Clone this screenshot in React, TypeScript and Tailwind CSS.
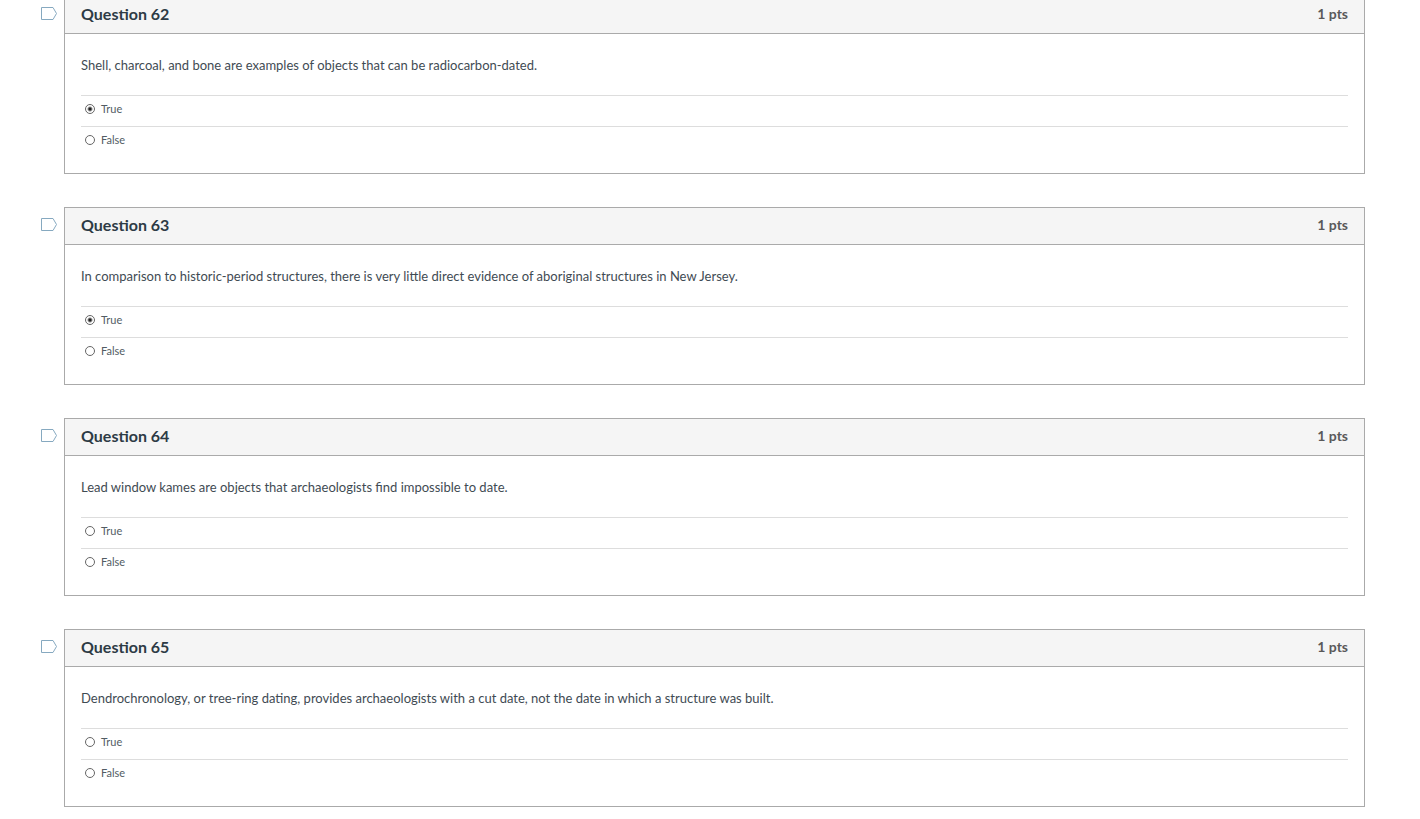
import React, { useState } from "react";

interface Question {
  id: number;
  text: string;
  points: number;
  answer?: string;
}

interface QuestionCardProps {
  question: Question;
}

const questions: Question[] = [
  {
    id: 62,
    text: "Shell, charcoal, and bone are examples of objects that can be radiocarbon-dated.",
    points: 1,
    answer: "True",
  },
  {
    id: 63,
    text: "In comparison to historic-period structures, there is very little direct evidence of aboriginal structures in New Jersey.",
    points: 1,
    answer: "True",
  },
  {
    id: 64,
    text: "Lead window kames are objects that archaeologists find impossible to date.",
    points: 1,
  },
  {
    id: 65,
    text: "Dendrochronology, or tree-ring dating, provides archaeologists with a cut date, not the date in which a structure was built.",
    points: 1,
  },
];

const QuestionCard: React.FC<QuestionCardProps> = ({ question }) => {
  const [selected, setSelected] = useState(question.answer);
  const [flagged, setFlagged] = useState(false);

  return (
    <div className="flex items-start">
      {/* Flag Button */}
      <button
        type="button"
        aria-label={`Flag question ${question.id}`}
        aria-pressed={flagged}
        onClick={() => setFlagged(!flagged)}
        className="mt-[11px] mr-[7px] shrink-0"
      >
        <svg width="16" height="13" viewBox="0 0 16 13" className="block">
          <path
            d="M0.5 0.5H12L15.5 6.5L12 12.5H0.5Z"
            fill={flagged ? "#f5c518" : "#fff"}
            stroke="#86a9c0"
          />
        </svg>
      </button>

      <section className="min-w-0 flex-1 border border-[#aaa]">
        {/* Header */}
        <div className="flex h-[37px] items-center justify-between border-b border-[#aaa] bg-[#f5f5f5] px-4 pb-0.5">
          <h2 className="text-base leading-5 font-bold text-[#2d3b45]">
            Question {question.id}
          </h2>
          <span className="text-sm leading-5 font-bold text-[#595959]">
            {question.points} pts
          </span>
        </div>

        {/* Question Text and Answers */}
        <fieldset className="px-4 pt-[21px] pb-4">
          <legend className="float-left mb-5 w-full text-[13px] leading-5 text-[#3f4b53]">
            {question.text}
          </legend>
          {["True", "False"].map((answer) => (
            <label
              key={answer}
              className="clear-both flex h-[31px] items-center border-t border-[#ddd] pb-1 pl-1 text-[11px] leading-4 text-[#525c64]"
            >
              <input
                type="radio"
                name={`question-${question.id}`}
                value={answer}
                checked={selected === answer}
                onChange={() => setSelected(answer)}
                className="mr-[6px] size-[10px] appearance-none rounded-full border border-[#666] bg-white checked:bg-[radial-gradient(circle,#222_1px,transparent_3px)]"
              />
              {answer}
            </label>
          ))}
        </fieldset>
      </section>
    </div>
  );
};

const App: React.FC = () => {
  return (
    <main className="-mt-1 flex flex-col gap-[33px] bg-white pr-[55px] pb-3 pl-[41px] font-['Lato',sans-serif]">
      {questions.map((question) => (
        <QuestionCard key={question.id} question={question} />
      ))}
    </main>
  );
};

export default App;
